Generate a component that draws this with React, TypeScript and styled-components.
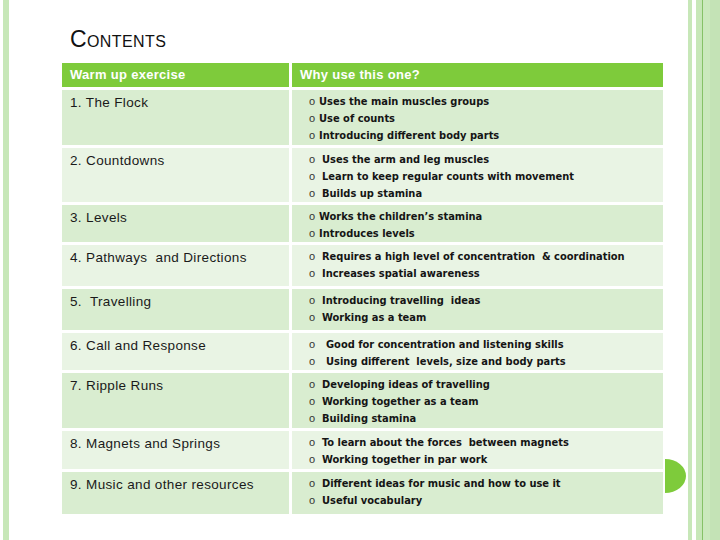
import React from "react";
import styled, { createGlobalStyle } from "styled-components";

const Global = createGlobalStyle`
  html, body { margin: 0; padding: 0; background: #fff; }
  body { width: 720px; height: 540px; overflow: hidden; font-family: "Liberation Sans", Arial, sans-serif; }
`;

const Page = styled.div`
  position: relative;
  width: 720px;
  height: 540px;
  display: flex;
  background: #fff;
`;

const LeftStripe = styled.div`
  width: 6px;
  margin-left: 3px;
  background: #c7e7b8;
  flex: none;
`;

const Content = styled.div`
  flex: 1;
  padding: 26px 0 0 53px;
  display: flex;
  flex-direction: column;
`;

const Title = styled.h1`
  margin: 0 0 11px 8px;
  font-family: "Liberation Sans", Arial, sans-serif;
  font-weight: normal;
  font-variant: small-caps;
  font-size: 23px;
  line-height: 26px;
  color: #111;
  letter-spacing: 0.4px;
`;

const Table = styled.div`
  width: 601px;
  display: grid;
  grid-template-columns: 227px 371px;
  column-gap: 3px;
  row-gap: 3px;
`;

const HeadCell = styled.div`
  background: #7ecb3b;
  color: #fff;
  font-weight: bold;
  font-size: 13px;
  height: 24px;
  line-height: 24px;
  padding-left: 8px;
  letter-spacing: 0.3px;
`;

const Cell = styled.div<{ $alt: boolean; $h: number }>`
  background: ${(p) => (p.$alt ? "#e9f4e4" : "#d9edd0")};
  height: ${(p) => p.$h}px;
  box-sizing: border-box;
`;

const NameCell = styled(Cell)`
  padding: 5px 0 0 8px;
  font-size: 13.5px;
  line-height: 16px;
  color: #1a1a1a;
  letter-spacing: 0.35px;
  white-space: pre;
`;

const List = styled(Cell)`
  margin: 0;
  padding: 3px 0 0 17px;
  list-style: none;
  display: flex;
  flex-direction: column;
`;

const Item = styled.li`
  display: flex;
  height: 17px;
  line-height: 17px;
  align-items: baseline;
  font-family: "DejaVu Sans Condensed", "DejaVu Sans", sans-serif;
  font-weight: bold;
  font-size: 11px;
  color: #151515;
  white-space: pre;
`;

const Bullet = styled.span<{ $indent: number }>`
  font-family: "Liberation Sans", Arial, sans-serif;
  font-weight: normal;
  font-size: 11px;
  color: #333;
  width: ${(p) => 10 + p.$indent}px;
  flex: none;
`;

const RightBars = styled.div`
  position: absolute;
  top: 0;
  right: 0;
  width: 32px;
  height: 540px;
  display: flex;
`;

const Bar = styled.div<{ $w: number; $c: string }>`
  width: ${(p) => p.$w}px;
  background: ${(p) => p.$c};
  flex: none;
`;

const HalfDot = styled.div`
  position: absolute;
  left: 665px;
  top: 459px;
  width: 21px;
  height: 34px;
  background: #7ecb3b;
  border-radius: 0 21px 21px 0 / 0 17px 17px 0;
`;

type Row = { name: string; items: string[]; indent: number; h: number };

const rows: Row[] = [
  { name: "1. The Flock", items: ["Uses the main muscles groups", "Use of counts", "Introducing different body parts"], indent: 0, h: 55 },
  { name: "2. Countdowns", items: ["Uses the arm and leg muscles", "Learn to keep regular counts with movement", "Builds up stamina"], indent: 3, h: 54 },
  { name: "3. Levels", items: ["Works the children\u2019s stamina", "Introduces levels"], indent: 0, h: 37 },
  { name: "4. Pathways  and Directions", items: ["Requires a high level of concentration  & coordination", "Increases spatial awareness"], indent: 3, h: 41 },
  { name: "5.  Travelling", items: ["Introducing travelling  ideas", "Working as a team"], indent: 3, h: 41 },
  { name: "6. Call and Response", items: ["Good for concentration and listening skills", "Using different  levels, size and body parts"], indent: 7, h: 37 },
  { name: "7. Ripple Runs", items: ["Developing ideas of travelling", "Working together as a team", "Building stamina"], indent: 3, h: 55 },
  { name: "8. Magnets and Springs", items: ["To learn about the forces  between magnets", "Working together in par work"], indent: 3, h: 38 },
  { name: "9. Music and other resources", items: ["Different ideas for music and how to use it", "Useful vocabulary"], indent: 3, h: 42 },
];

export default function App() {
  return (
    <Page>
      <Global />
      <LeftStripe />
      <Content>
        <Title>Contents</Title>
        <Table>
          <HeadCell>Warm up exercise</HeadCell>
          <HeadCell>Why use this one?</HeadCell>
          {rows.map((r, i) => (
            <React.Fragment key={r.name}>
              <NameCell $alt={i % 2 === 1} $h={r.h}>{r.name}</NameCell>
              <List as="ul" $alt={i % 2 === 1} $h={r.h}>
                {r.items.map((t) => (
                  <Item key={t}>
                    <Bullet $indent={r.indent}>o</Bullet>
                    {t}
                  </Item>
                ))}
              </List>
            </React.Fragment>
          ))}
        </Table>
      </Content>
      <HalfDot />
      <RightBars>
        <Bar $w={4} $c="#c7e7b8" />
        <Bar $w={4} $c="#ffffff" />
        <Bar $w={6} $c="#c7e7b8" />
        <Bar $w={1} $c="#86c267" />
        <Bar $w={7} $c="#cbe9bd" />
        <Bar $w={10} $c="#c4e3b6" />
      </RightBars>
    </Page>
  );
}
